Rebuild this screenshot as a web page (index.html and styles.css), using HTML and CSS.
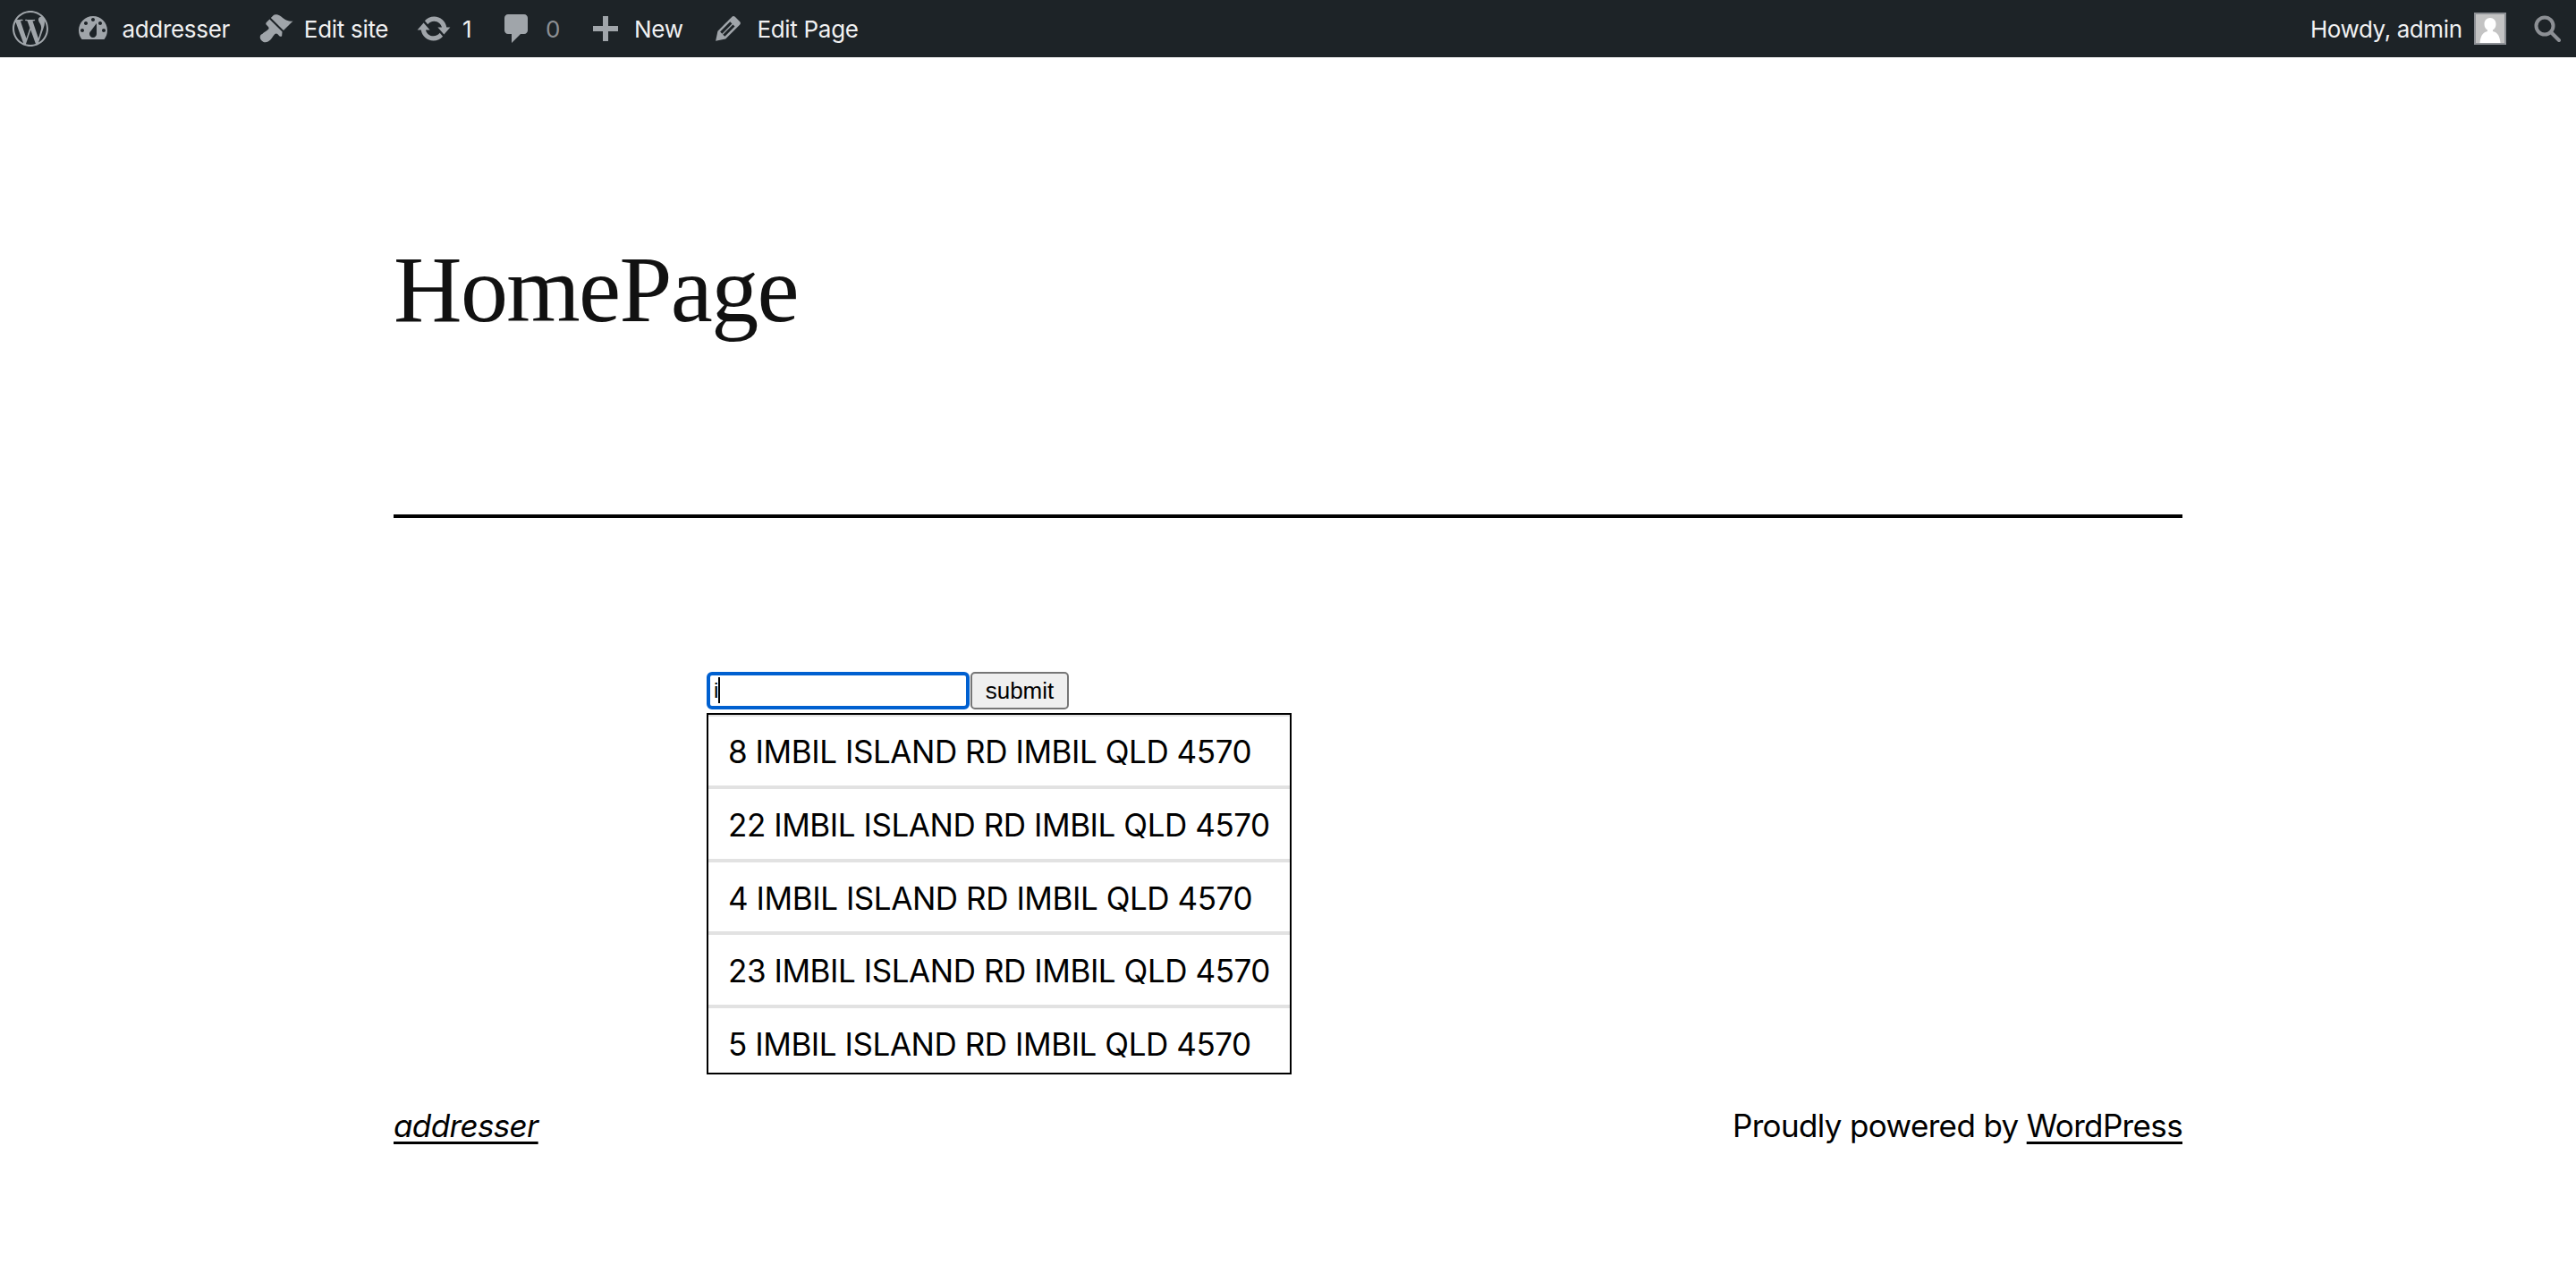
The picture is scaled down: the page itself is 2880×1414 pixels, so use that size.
FILE: index.html
```html
<!DOCTYPE html>
<html lang="en">
<head>
    <meta charset="UTF-8">
    <title>HomePage – addresser</title>
    <link rel="stylesheet" href="styles.css">
</head>
<body>
    <nav class="adminbar">
        <div class="bar-group">
            <a class="bar-item logo"><svg class="ico" viewBox="0 0 24 24"><path d="M21.469 6.825c.84 1.537 1.318 3.3 1.318 5.175 0 3.979-2.156 7.456-5.363 9.325l3.295-9.527c.615-1.54.82-2.771.82-3.864 0-.405-.026-.78-.07-1.11m-7.981.105c.647-.03 1.232-.105 1.232-.105.582-.075.514-.93-.067-.899 0 0-1.755.135-2.88.135-1.064 0-2.85-.15-2.85-.15-.585-.03-.661.855-.075.885 0 0 .54.061 1.125.09l1.68 4.605-2.37 7.08L5.354 6.9c.649-.03 1.234-.1 1.234-.1.585-.075.516-.93-.065-.896 0 0-1.746.138-2.874.138-.2 0-.438-.008-.69-.015C4.911 3.15 8.235 1.215 12 1.215c2.809 0 5.365 1.072 7.286 2.833-.046-.003-.091-.009-.141-.009-1.06 0-1.812.923-1.812 1.914 0 .89.513 1.643 1.06 2.531.411.72.89 1.643.89 2.977 0 .915-.354 1.994-.821 3.479l-1.075 3.585-3.9-11.61.001.014zM12 22.784c-1.059 0-2.081-.153-3.048-.437l3.237-9.406 3.315 9.087c.024.053.05.101.078.149-1.12.393-2.325.609-3.582.609M1.211 12c0-1.564.336-3.05.935-4.39L7.29 21.709C3.694 19.96 1.212 16.271 1.211 12M12 0C5.385 0 0 5.385 0 12s5.385 12 12 12 12-5.385 12-12S18.615 0 12 0"/></svg></a>
            <a class="bar-item"><svg class="ico" viewBox="0 0 20 20"><path fill-rule="evenodd" d="M3.76 16h12.48c1.1-1.37 1.76-3.11 1.76-5 0-4.42-3.58-8-8-8s-8 3.58-8 8c0 1.89.66 3.63 1.76 5zM10 4c.55 0 1 .45 1 1s-.45 1-1 1-1-.45-1-1 .45-1 1-1zM6 6c.55 0 1 .45 1 1s-.45 1-1 1-1-.45-1-1 .45-1 1-1zm8 0c.55 0 1 .45 1 1s-.45 1-1 1-1-.45-1-1 .45-1 1-1zm-5.37 5.55L12 7v6c0 1.1-.9 2-2 2s-2-.9-2-2c0-.57.24-1.08.63-1.45zM4 10c.55 0 1 .45 1 1s-.45 1-1 1-1-.45-1-1 .45-1 1-1zm12 0c.55 0 1 .45 1 1s-.45 1-1 1-1-.45-1-1 .45-1 1-1z"/></svg>addresser</a>
            <a class="bar-item"><svg class="ico" viewBox="0 0 20 20"><path d="M14.48 11.06L7.41 3.99l1.5-1.5c.5-.56 2.3-.47 3.51.32 1.21.8 1.43 1.28 2.91 2.1 1.18.64 2.45 1.26 4.45.85zm-.71.71L6.7 4.7 4.93 6.47c-.39.39-.39 1.02 0 1.41l1.06 1.06c.39.39.39 1.03 0 1.42-.6.6-1.43 1.11-2.21 1.69-.35.26-.7.53-1.01.84C1.43 13.23.65 15.1 2.3 16.75c1.65 1.65 3.52.87 4.86-.47.31-.31.58-.66.84-1.01.58-.78 1.09-1.61 1.69-2.21.39-.39 1.03-.39 1.42 0l1.06 1.06c.39.39 1.02.39 1.41 0z"/></svg>Edit site</a>
            <a class="bar-item"><svg class="ico" viewBox="0 0 20 20"><path d="M10.2 3.28c3.53 0 6.43 2.61 6.92 6h2.08l-3.5 4-3.5-4h2.32c-.45-1.97-2.21-3.45-4.32-3.45-1.45 0-2.73.71-3.54 1.78L4.95 5.66C6.23 4.2 8.11 3.28 10.2 3.28zm-.4 13.44c-3.52 0-6.43-2.61-6.92-6H.8l3.5-4c1.17 1.33 2.33 2.67 3.5 4H5.48c.45 1.97 2.21 3.45 4.32 3.45 1.45 0 2.73-.71 3.54-1.78l1.71 1.95c-1.28 1.46-3.15 2.38-5.25 2.38z"/></svg>1</a>
            <a class="bar-item dim"><svg class="ico" viewBox="0 0 20 20"><path d="M5 2h9c1.1 0 2 .9 2 2v7c0 1.1-.9 2-2 2h-2l-5 5v-5H5c-1.1 0-2-.9-2-2V4c0-1.1.9-2 2-2z"/></svg>0</a>
            <a class="bar-item"><svg class="ico" viewBox="0 0 20 20"><path d="M17 8.500v3h-5.500V17h-3v-5.500H3v-3h5.500V3h3v5.500z"/></svg>New</a>
            <a class="bar-item"><svg class="ico" viewBox="0 0 20 20"><path fill-rule="evenodd" d="M13.89 3.39l2.71 2.72c.46.46.42 1.24.03 1.64l-8.01 8.02-5.56 1.16 1.16-5.58s7.6-7.63 7.99-8.03c.39-.39 1.22-.39 1.68.07zm-2.73 2.79l-5.59 5.61 1.11 1.11 5.54-5.65zm-2.97 8.23l5.58-5.6-1.07-1.08-5.59 5.6z"/></svg>Edit Page</a>
        </div>
        <div class="bar-group">
            <a class="bar-item howdy">Howdy, admin<span class="avatar"><svg viewBox="0 0 32 32"><path d="M16 4c4 0 6.500 3 6.500 7 0 3-1.500 5.500-3.500 6.500v1.500c4 1 7.500 3 8.500 13h-23c1-10 4.500-12 8.500-13v-1.500c-2-1-3.500-3.500-3.500-6.500 0-4 2.500-7 6.500-7z"/></svg></span></a>
            <a class="bar-item search"><svg class="ico-search" viewBox="0 0 30 30"><circle cx="12" cy="12" r="9.500"/><path d="M19 19l9 9"/></svg></a>
        </div>
    </nav>

    <header class="site-head">
        <h1>HomePage</h1>
    </header>
    <hr class="rule">

    <main class="content">
        <form class="search-form">
            <span class="addr-wrap">
                <input class="addr" type="text" value="i">
                <span class="caret"></span>
            </span>
            <button class="go" type="button">submit</button>
        </form>
        <ul class="results">
            <li>8 IMBIL ISLAND RD IMBIL QLD 4570</li>
            <li>22 IMBIL ISLAND RD IMBIL QLD 4570</li>
            <li>4 IMBIL ISLAND RD IMBIL QLD 4570</li>
            <li>23 IMBIL ISLAND RD IMBIL QLD 4570</li>
            <li>5 IMBIL ISLAND RD IMBIL QLD 4570</li>
        </ul>
    </main>

    <footer class="site-foot">
        <a class="site-name">addresser</a>
        <p>Proudly powered by <a>WordPress</a></p>
    </footer>
</body>
</html>
```

FILE: styles.css
```css
*{
    margin: 0;
    padding: 0;
    box-sizing: border-box;
}
body{
    font-family: Inter, "Liberation Sans", sans-serif;
    background: #fff;
    color: #000;
}
.adminbar{
    height: 64px;
    background: #1d2327;
    color: #f0f0f1;
    display: flex;
    justify-content: space-between;
    font-size: 26px;
    letter-spacing: -0.3px;
}
.bar-group{
    display: flex;
    align-items: center;
}
.bar-item{
    display: flex;
    align-items: center;
    gap: 12px;
    padding: 0 15.4px;
}
.bar-item.logo{
    padding: 0 15px 0 14px;
}
.ico{
    width: 40px;
    height: 40px;
    fill: #a0a5aa;
}
.dim{
    color: #8c8f94;
}
.howdy{
    gap: 13px;
    letter-spacing: -0.4px;
}
.avatar{
    width: 36px;
    height: 36px;
    background: #c3c3c3;
    border: 2px solid #8c8f94;
    display: flex;
}
.avatar svg{
    width: 100%;
    height: 100%;
    fill: #fff;
}
.bar-item.search{
    padding: 0 17px 0 16px;
}
.ico-search{
    width: 30px;
    height: 30px;
    fill: none;
    stroke: #8c8f94;
    stroke-width: 4;
    stroke-linecap: round;
}
.site-head{
    padding: 196px 440px 0;
    height: 511px;
}
h1{
    font-family: "Liberation Serif", serif;
    font-weight: 400;
    font-size: 106px;
    line-height: 1.2;
    letter-spacing: -1.65px;
    color: #111;
}
.rule{
    border: 0;
    height: 4px;
    background: #000;
    margin: 0 440px;
}
.content{
    padding: 172px 0 0 790px;
}
.search-form{
    display: flex;
    gap: 1px;
    height: 42px;
}
.addr-wrap{
    position: relative;
    display: flex;
}
.addr{
    width: 294px;
    height: 42px;
    border: 4px solid #0060d0;
    border-radius: 6px;
    outline: 0;
    font-family: "Liberation Sans", sans-serif;
    font-size: 24px;
    padding: 0 4px;
}
.caret{
    position: absolute;
    left: 13px;
    top: 6px;
    width: 2px;
    height: 29px;
    background: #000;
}
.go{
    width: 110px;
    height: 42px;
    border: 2px solid #767676;
    border-radius: 5px;
    background: #efefef;
    font-family: "Liberation Sans", sans-serif;
    font-size: 26px;
}
.results{
    list-style: none;
    width: 654px;
    height: 404px;
    margin-top: 4px;
    border: 2px solid #000;
    overflow: hidden;
}
.results li{
    height: 81.6px;
    border-top: 4px solid #e2e2e2;
    padding: 18px 22px 0;
    font-size: 35px;
    letter-spacing: -0.44px;
    line-height: 44px;
    white-space: nowrap;
}
.results li:first-child{
    height: 79px;
    border-top-width: 2px;
    padding-top: 17px;
}
.site-foot{
    display: flex;
    justify-content: space-between;
    padding: 35px 440px 0;
    font-size: 35px;
    letter-spacing: -0.64px;
    line-height: 44px;
}
.site-foot a{
    text-decoration: underline;
    text-underline-offset: 5px;
    text-decoration-thickness: 3px;
}
.site-name{
    font-style: italic;
}
```
